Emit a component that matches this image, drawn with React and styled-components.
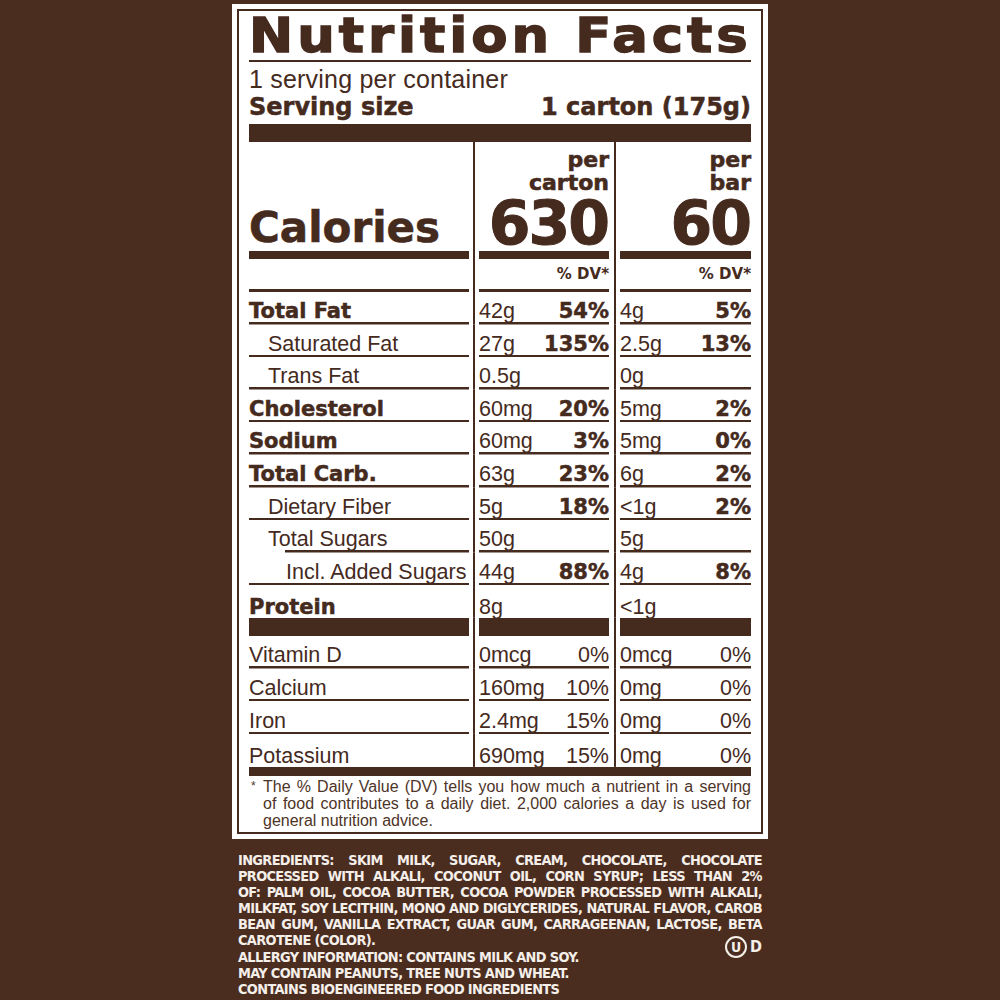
import React from "react";
import styled, { createGlobalStyle } from "styled-components";

const INK = "#452a1e";
const BG = "#4b2d20";
const HEAVY = `"DejaVu Sans", "Liberation Sans", sans-serif`;
const PLAIN = `"Liberation Sans", Arial, sans-serif`;
const CREAM = "#f5efea";

const GlobalStyle = createGlobalStyle`
  body {
    margin: 0;
    background: ${BG};
  }
`;

const Page = styled.main`
  width: 1000px;
  height: 1000px;
  background: ${BG};
  padding-top: 4px;
  box-sizing: border-box;
  display: flex;
  flex-direction: column;
  align-items: center;
  overflow: hidden;
`;

const Label = styled.section`
  width: 536px;
  background: #fff;
  padding: 5px;
  box-sizing: border-box;
  color: ${INK};
`;

const Frame = styled.div`
  border: 2px solid ${INK};
  padding: 0 10px 3px;
`;

/* the printed title uses a wide black face, so DejaVu Bold is stretched a bit */
const Heading = styled.h1`
  margin: 0;
  font-family: ${HEAVY};
  font-weight: 700;
  font-size: 48px;
  line-height: 48px;
  letter-spacing: 3.6px;
  -webkit-text-stroke: 1.4px ${INK};
  white-space: nowrap;
  transform: scaleX(1.1);
  transform-origin: left center;
`;

const Rule = styled.div`
  height: ${(p) => p.$h}px;
  margin-top: ${(p) => p.$mt || 0}px;
  background: ${INK};
`;

const Servings = styled.div`
  margin-top: 3px;
  font-family: ${PLAIN};
  font-size: 25px;
  line-height: 28px;
  letter-spacing: 0.2px;
`;

const ServingSize = styled.div`
  display: flex;
  justify-content: space-between;
  font-family: ${HEAVY};
  font-weight: 700;
  font-size: 24px;
  line-height: 28px;
  -webkit-text-stroke: 0.5px ${INK};
`;

const Row = styled.div`
  display: flex;
  height: ${(p) => p.$h}px;
`;

const Sep = styled.div`
  width: ${(p) => p.$w}px;
  flex: none;
  background: linear-gradient(${INK}, ${INK}) center / 2px 100% no-repeat;
`;

const Cell = styled.div`
  width: ${(p) => p.$w}px;
  flex: none;
  box-sizing: border-box;
  display: flex;
  align-items: flex-end;
  justify-content: space-between;
  padding-left: ${(p) => p.$indent || 0}px;
  padding-bottom: ${(p) => p.$rule || 0}px;
  line-height: 22px;
  background: ${(p) =>
    p.$rule
      ? `linear-gradient(${INK}, ${INK}) no-repeat left ${p.$ruleIndent || 0}px bottom / calc(100% - ${p.$ruleIndent || 0}px) ${p.$rule}px`
      : "none"};
`;

const BarCell = styled.div`
  width: ${(p) => p.$w}px;
  flex: none;
  background: ${INK};
`;

const LabelText = styled.span`
  font-family: ${(p) => (p.$bold ? HEAVY : PLAIN)};
  font-weight: ${(p) => (p.$bold ? 700 : 400)};
  font-size: ${(p) => (p.$bold ? 21 : 21.5)}px;
  -webkit-text-stroke: ${(p) => (p.$bold ? "0.5px" : "0")} ${INK};
  white-space: nowrap;
`;

const Amount = styled.span`
  font-family: ${PLAIN};
  font-size: 21.5px;
  white-space: nowrap;
`;

const Pct = styled.span`
  font-family: ${(p) => (p.$bold ? HEAVY : PLAIN)};
  font-weight: ${(p) => (p.$bold ? 700 : 400)};
  font-size: ${(p) => (p.$bold ? 21 : 21.5)}px;
  -webkit-text-stroke: ${(p) => (p.$bold ? "0.5px" : "0")} ${INK};
  white-space: nowrap;
`;

const CalCell = styled.div`
  width: ${(p) => p.$w}px;
  flex: none;
  box-sizing: border-box;
  display: flex;
  flex-direction: column;
  justify-content: flex-end;
  align-items: ${(p) => (p.$right ? "flex-end" : "flex-start")};
  border-bottom: 8px solid ${INK};
  padding-bottom: 2px;
  font-family: ${HEAVY};
  font-weight: 700;
  -webkit-text-stroke: 0.6px ${INK};
`;

const CalWord = styled.div`
  font-size: 42px;
  line-height: 42px;
`;

const PerLabel = styled.div`
  font-size: 22px;
  line-height: 23px;
  text-align: right;
  margin-bottom: 3px;
`;

const CalNumber = styled.div`
  font-size: 60px;
  line-height: 52px;
  letter-spacing: -2px;
  margin-right: 1px;
  -webkit-text-stroke: 1px ${INK};
`;

const DvCell = styled.div`
  width: ${(p) => p.$w}px;
  flex: none;
  box-sizing: border-box;
  border-bottom: 3px solid ${INK};
  font-family: ${HEAVY};
  font-weight: 700;
  font-size: 15px;
  line-height: 30px;
  text-align: right;
`;

const Footnote = styled.div`
  display: flex;
  margin-top: 2px;
  font-family: ${PLAIN};
  font-size: 16px;
  line-height: 17px;
  color: #4e3427;
`;

const Star = styled.span`
  width: 12px;
  flex: none;
  font-size: 12px;
  padding-left: 2px;
`;

const FootLines = styled.div`
  flex: 1;
`;

const JustLine = styled.div`
  text-align: justify;
  text-align-last: ${(p) => (p.$last ? "left" : "justify")};
  white-space: nowrap;
`;

const Ingredients = styled.section`
  width: 524px;
  margin-top: 13px;
  color: ${CREAM};
  font-family: "Liberation Sans Narrow", "DejaVu Sans Condensed", "Liberation Sans", sans-serif;
  font-stretch: condensed;
  font-weight: 700;
  font-size: 14.4px;
  line-height: 16.1px;
  letter-spacing: -0.65px;
`;

const IngLine = styled.div`
  display: flex;
  justify-content: ${(p) => (p.$spread ? "space-between" : "flex-start")};
  align-items: flex-start;
  gap: 3px;
  white-space: nowrap;
`;

const Kosher = styled.span`
  display: inline-flex;
  align-items: center;
  gap: 3px;
  height: 16px;
  font-size: 16px;
  letter-spacing: 0;
`;

const KosherRing = styled.span`
  width: 18px;
  height: 18px;
  border: 2px solid ${CREAM};
  border-radius: 50%;
  display: inline-flex;
  align-items: center;
  justify-content: center;
  font-size: 14px;
  line-height: 1;
  transform: translateY(7px);
`;

const KosherD = styled.span`
  transform: translateY(7px);
`;

const W = [220, 130, 131];
const SEP = [10, 11];
const ROW_H = 32.6;

const nutrients = [
  { label: "Total Fat", bold: true, v: ["42g", "54%", "4g", "5%"] },
  { label: "Saturated Fat", indent: 19, v: ["27g", "135%", "2.5g", "13%"] },
  { label: "Trans Fat", indent: 19, v: ["0.5g", "", "0g", ""] },
  { label: "Cholesterol", bold: true, v: ["60mg", "20%", "5mg", "2%"] },
  { label: "Sodium", bold: true, v: ["60mg", "3%", "5mg", "0%"] },
  { label: "Total Carb.", bold: true, v: ["63g", "23%", "6g", "2%"] },
  { label: "Dietary Fiber", indent: 19, v: ["5g", "18%", "<1g", "2%"] },
  { label: "Total Sugars", indent: 19, ruleIndent: 36, v: ["50g", "", "5g", ""] },
  { label: "Incl. Added Sugars", indent: 37, v: ["44g", "88%", "4g", "8%"] },
  { label: "Protein", bold: true, last: true, v: ["8g", "", "<1g", ""] },
];

const vitamins = [
  { label: "Vitamin D", v: ["0mcg", "0%", "0mcg", "0%"] },
  { label: "Calcium", v: ["160mg", "10%", "0mg", "0%"] },
  { label: "Iron", v: ["2.4mg", "15%", "0mg", "0%"] },
  { label: "Potassium", last: true, v: ["690mg", "15%", "0mg", "0%"] },
];

const ingredientLines = [
  "INGREDIENTS: SKIM MILK, SUGAR, CREAM, CHOCOLATE, CHOCOLATE",
  "PROCESSED WITH ALKALI, COCONUT OIL, CORN SYRUP; LESS THAN 2%",
  "OF: PALM OIL, COCOA BUTTER, COCOA POWDER PROCESSED WITH ALKALI,",
  "MILKFAT, SOY LECITHIN, MONO AND DIGLYCERIDES, NATURAL FLAVOR, CAROB",
  "BEAN GUM, VANILLA EXTRACT, GUAR GUM, CARRAGEENAN, LACTOSE, BETA",
];

const NutrientRow = ({ item, pctBold = true, h = ROW_H }) => {
  const rule = item.last ? 0 : 2.5;
  return (
    <Row $h={h}>
      <Cell $w={W[0]} $indent={item.indent} $rule={rule} $ruleIndent={item.ruleIndent}>
        <LabelText $bold={item.bold}>{item.label}</LabelText>
      </Cell>
      <Sep $w={SEP[0]} />
      <Cell $w={W[1]} $rule={rule}>
        <Amount>{item.v[0]}</Amount>
        <Pct $bold={pctBold}>{item.v[1]}</Pct>
      </Cell>
      <Sep $w={SEP[1]} />
      <Cell $w={W[2]} $rule={rule}>
        <Amount>{item.v[2]}</Amount>
        <Pct $bold={pctBold}>{item.v[3]}</Pct>
      </Cell>
    </Row>
  );
};

export default function App() {
  return (
    <>
      <GlobalStyle />
      <Page>
        <Label>
          <Frame>
            <Heading>Nutrition Facts</Heading>
            <Rule $h={2} $mt={1} />
            <Servings>1 serving per container</Servings>
            <ServingSize>
              <span>Serving size</span>
              <span>1 carton (175g)</span>
            </ServingSize>
            <Rule $h={18} $mt={3} />

            <Row $h={117}>
              <CalCell $w={W[0]}>
                <CalWord>Calories</CalWord>
              </CalCell>
              <Sep $w={SEP[0]} />
              <CalCell $w={W[1]} $right>
                <PerLabel>
                  per
                  <br />
                  carton
                </PerLabel>
                <CalNumber>630</CalNumber>
              </CalCell>
              <Sep $w={SEP[1]} />
              <CalCell $w={W[2]} $right>
                <PerLabel>
                  per
                  <br />
                  bar
                </PerLabel>
                <CalNumber>60</CalNumber>
              </CalCell>
            </Row>

            <Row $h={33}>
              <DvCell $w={W[0]} />
              <Sep $w={SEP[0]} />
              <DvCell $w={W[1]}>% DV*</DvCell>
              <Sep $w={SEP[1]} />
              <DvCell $w={W[2]}>% DV*</DvCell>
            </Row>

            {nutrients.map((n) => (
              <NutrientRow key={n.label} item={n} />
            ))}

            <Row $h={18}>
              <BarCell $w={W[0]} />
              <Sep $w={SEP[0]} />
              <BarCell $w={W[1]} />
              <Sep $w={SEP[1]} />
              <BarCell $w={W[2]} />
            </Row>

            {vitamins.map((n) => (
              <NutrientRow key={n.label} item={n} pctBold={false} h={32.75} />
            ))}

            <Rule $h={9} />

            <Footnote>
              <Star>*</Star>
              <FootLines>
                <JustLine>The % Daily Value (DV) tells you how much a nutrient in a serving</JustLine>
                <JustLine>of food contributes to a daily diet. 2,000 calories a day is used for</JustLine>
                <JustLine $last>general nutrition advice.</JustLine>
              </FootLines>
            </Footnote>
          </Frame>
        </Label>

        <Ingredients>
          {ingredientLines.map((line) => (
            <IngLine key={line} $spread>
              {line.split(" ").map((w, i) => (
                <span key={i}>{w}</span>
              ))}
            </IngLine>
          ))}
          <IngLine $spread>
            <span>CAROTENE (COLOR).</span>
            <Kosher>
              <KosherRing>U</KosherRing>
              <KosherD>D</KosherD>
            </Kosher>
          </IngLine>
          <IngLine>ALLERGY INFORMATION: CONTAINS MILK AND SOY.</IngLine>
          <IngLine>MAY CONTAIN PEANUTS, TREE NUTS AND WHEAT.</IngLine>
          <IngLine>CONTAINS BIOENGINEERED FOOD INGREDIENTS</IngLine>
        </Ingredients>
      </Page>
    </>
  );
}
